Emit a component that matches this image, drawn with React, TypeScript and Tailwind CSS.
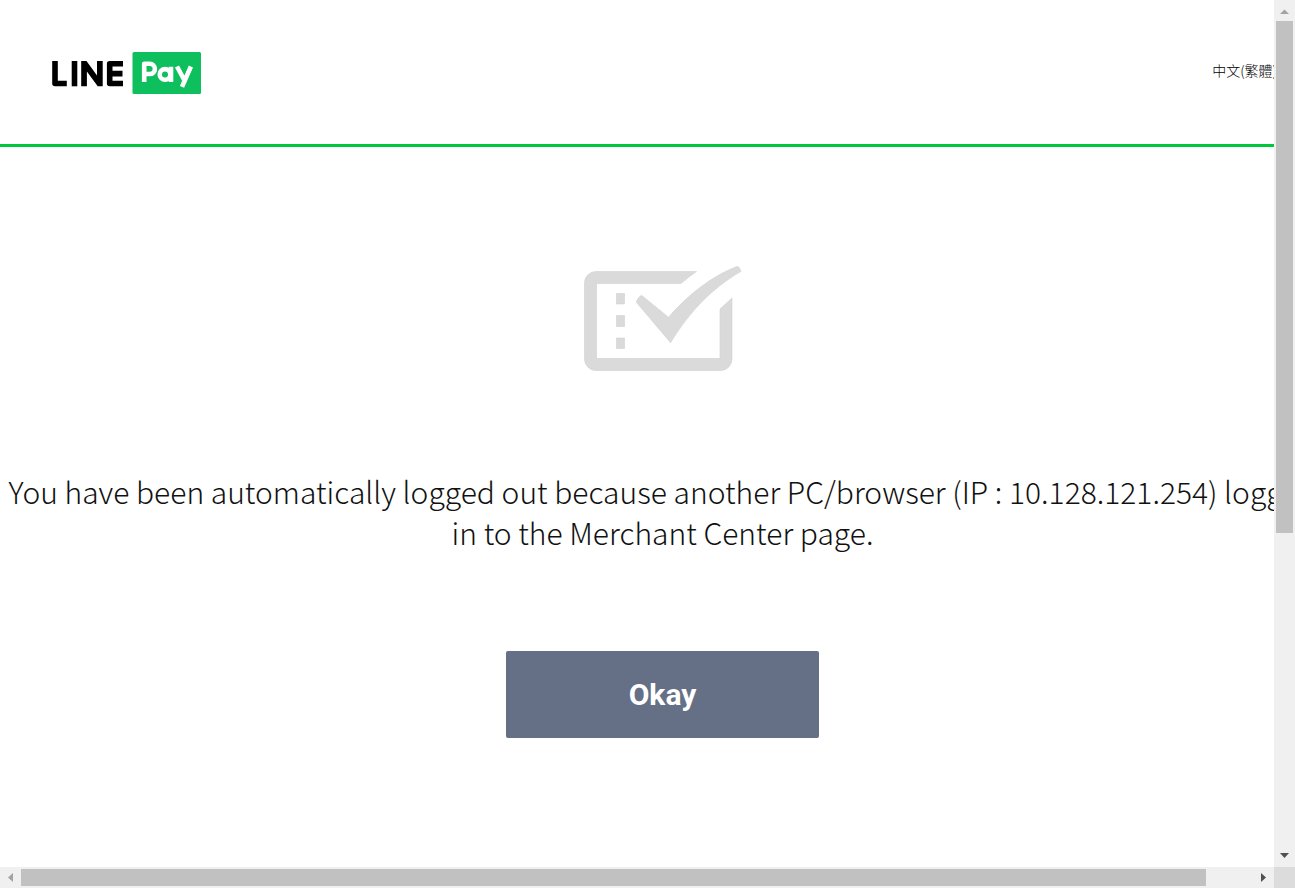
function Logo() {
  return (
    <svg viewBox="0 0 150 43" className="h-[43px] w-[150px]" role="img" aria-label="LINE Pay">
      <g fill="none" stroke="#000" strokeWidth="5.6" strokeLinejoin="round">
        <path d="M4 10V32.500H15.800" />
        <path d="M23.500 10V35.300" />
        <path d="M72 12.700H58.700V32.500H72M58.700 22.600H71.500" />
      </g>
      <path fill="#000" d="M30.200 10h5.300L46 24.500V10h5.700V35.300h-5L35.900 20.500V35.300h-5.700z" />
      <rect x="81.500" y="1" width="68.500" height="42" rx="1.500" fill="#0dbf5d" />
      <g fill="none" stroke="#fff" strokeWidth="4.600" strokeLinejoin="round">
        <path d="M93.200 31V12.800H98.800a4.700 4.700 0 0 1 0 10.200H93.200" />
        <circle cx="114" cy="23.400" r="5.300" />
        <path d="M120 15.800V31M126 15.500L133 28.500M139.900 15.500L131 35.800" />
      </g>
    </svg>
  );
}

function ChecklistIcon() {
  return (
    <svg viewBox="0 0 158 106" className="h-[106px] w-[158px]" fill="#dadada" stroke="#d2d2d2" strokeWidth="0.600" aria-hidden="true">
      <path d="M112.500 5.500H12A11.500 11.500 0 0 0 .5 17V93A11.500 11.500 0 0 0 12 104.500H136.500A11.500 11.500 0 0 0 148 93V32L136 43V92.500H12.500V17.500H97Q104.500 11 112.500 5.500Z" />
      <path d="M32.500 27.500h8v10.500h-8zM32.500 49.500h8v11h-8zM32.500 72h8v10.500h-8z" />
      <path d="M57.500 29.200L84.500 51.300C102 31 126.500 10.500 152.800 .6Q154.500 .3 155.400 2L157 5.300C128 22.500 106.500 44.500 86.600 76.700L52.300 36.300Q53.500 31.500 57.500 29.200Z" />
    </svg>
  );
}

function Arrow({ d, color }: { d: string; color: string }) {
  return (
    <svg viewBox="0 0 21 21" className="size-[21px] shrink-0" fill={color} aria-hidden="true">
      <path d={d} />
    </svg>
  );
}

export default function App() {
  return (
    <div className="grid h-screen grid-cols-[minmax(0,1fr)_21px] grid-rows-[minmax(0,1fr)_21px] overflow-hidden bg-white font-['Noto_Sans_CJK_TC',sans-serif] text-[#111]">
      <div className="overflow-hidden">
        <div className="min-w-[1325px]">
          <header className="flex h-[147px] items-center justify-between border-b-3 border-[#00c73c] pl-[51px] pr-12">
            <a href="#home">
              <Logo />
            </a>
            <a href="#language" className="-mt-1 text-sm font-light text-black">
              中文(繁體)
            </a>
          </header>
          <main className="flex flex-col items-center pt-[119px]">
            <ChecklistIcon />
            <p className="mt-[99px] text-center text-[30px] font-light leading-[41px] whitespace-nowrap">
              You have been automatically logged out because another PC/browser (IP : 10.128.121.254) logged
              <br />
              in to the Merchant Center page.
            </p>
            <button type="button" className="mt-[98px] h-[87px] w-[313px] rounded-xs bg-[#656f86] font-['Roboto',sans-serif] text-[30px] font-bold text-white">
              Okay
            </button>
          </main>
        </div>
      </div>
      <div className="flex flex-col justify-between bg-[#f0f0f0]" aria-hidden="true">
        <Arrow color="#a3a3a3" d="M6 14L10.500 9.500L15 14Z" />
        <div className="flex min-h-0 flex-1 justify-center">
          <div className="h-[62%] w-[17px] bg-[#c1c1c1]" />
        </div>
        <Arrow color="#505050" d="M6 7H15L10.500 12Z" />
      </div>
      <div className="flex items-center bg-[#f0f0f0]" aria-hidden="true">
        <Arrow color="#a3a3a3" d="M13 6V15L8 10.500Z" />
        <div className="flex min-w-0 flex-1">
          <div className="h-[17px] w-[96.2%] bg-[#c1c1c1]" />
        </div>
        <Arrow color="#505050" d="M8 6V15L13 10.500Z" />
      </div>
      <div className="bg-[#dcdcdc]" />
    </div>
  );
}
